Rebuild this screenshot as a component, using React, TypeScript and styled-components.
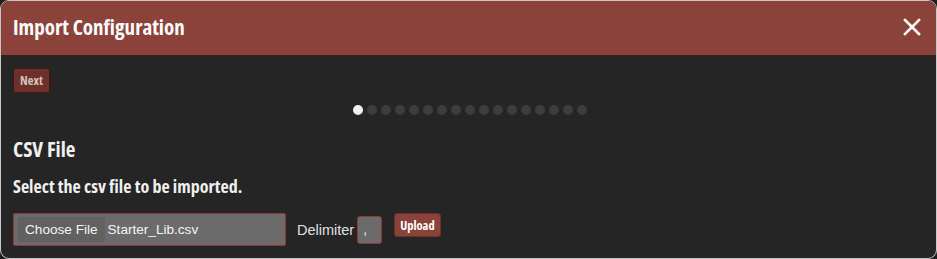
import styled, { createGlobalStyle } from "styled-components";

const GlobalStyle = createGlobalStyle`
  html, body {
    margin: 0;
    padding: 0;
    background-color: #1f1f1f;
  }
  * {
    box-sizing: border-box;
  }
`;

const condensed = `"Open Sans", "DejaVu Sans", sans-serif`;

const Dialog = styled.div`
  width: 937px;
  height: 259px;
  border: 1px solid #c8c8c8;
  border-radius: 9px;
  overflow: hidden;
  background-color: #252525;
  display: flex;
  flex-direction: column;
`;

const Header = styled.div`
  height: 54px;
  background-color: #8b423a;
  display: flex;
  align-items: center;
  justify-content: space-between;
  padding: 0 12px 2px 12px;
`;

const Title = styled.h1`
  margin: 0;
  font-family: ${condensed};
  font-stretch: 75%;
  font-weight: 700;
  font-size: 21px;
  color: #ffffff;
`;

const CloseButton = styled.button`
  border: none;
  background: none;
  padding: 0;
  width: 24px;
  height: 24px;
  display: flex;
  align-items: center;
  justify-content: center;
  cursor: pointer;
`;

const Body = styled.div`
  padding: 13px 12px 0 12px;
  display: flex;
  flex-direction: column;
`;

const SmallButton = styled.button<{ $dim?: boolean }>`
  align-self: flex-start;
  font-family: ${condensed};
  font-stretch: 75%;
  font-weight: 700;
  font-size: 12.5px;
  color: ${(p) => (p.$dim ? "#d0c4c2" : "#ffffff")};
  background-color: ${(p) => (p.$dim ? "#6f302b" : "#8b423a")};
  border: 1px solid ${(p) => (p.$dim ? "#3e1a17" : "#6c2f2a")};
  border-radius: 3px;
  padding: 0 ${(p) => (p.$dim ? "6px" : "5px")};
  height: ${(p) => (p.$dim ? "25px" : "24px")};
  cursor: pointer;
`;

const Dots = styled.div`
  display: flex;
  justify-content: center;
  gap: 4px;
  margin-top: 12px;
  padding-left: 2px;
`;

const Dot = styled.span<{ $active?: boolean }>`
  width: 10px;
  height: 10px;
  border-radius: 50%;
  background-color: ${(p) => (p.$active ? "#f2f2f2" : "#3d3d3d")};
`;

const SectionTitle = styled.h2`
  margin: 20px 0 0 0;
  font-family: ${condensed};
  font-stretch: 75%;
  font-weight: 700;
  font-size: 21px;
  color: #f0f0f0;
`;

const Instruction = styled.p`
  margin: 11px 0 0 0;
  font-family: ${condensed};
  font-stretch: 75%;
  font-weight: 700;
  font-size: 18px;
  color: #f0f0f0;
`;

const Row = styled.div`
  display: flex;
  align-items: center;
  margin-top: 15px;
`;

const FileBox = styled.div`
  width: 273px;
  height: 33px;
  background-color: #6b6b6b;
  border: 1px solid #8e3a33;
  border-radius: 2px;
  display: flex;
  align-items: center;
  padding-left: 4px;
  font-family: "Liberation Sans", Arial, sans-serif;
  font-size: 13.6px;
  color: #f4f4f4;
`;

const ChooseButton = styled.span`
  background-color: #616161;
  height: 25px;
  padding: 0 7px;
  display: flex;
  align-items: center;
  border-radius: 2px;
  margin-right: 3px;
`;

const Label = styled.span`
  font-family: "Liberation Sans", Arial, sans-serif;
  font-size: 14.5px;
  color: #e0e0e0;
  margin-left: 11px;
  margin-right: 3px;
`;

const DelimiterInput = styled.div`
  width: 25px;
  height: 28px;
  background-color: #6b6b6b;
  border: 1px solid #8e3a33;
  border-radius: 3px;
  font-family: "Liberation Sans", Arial, sans-serif;
  font-size: 14px;
  color: #f0f0f0;
  padding: 4px 0 0 5px;
  margin-right: 12px;
`;

const App = () => {
  return (
    <>
      <GlobalStyle />
      <Dialog>
        <Header>
          <Title>Import Configuration</Title>
          <CloseButton aria-label="close">
            <svg width="18" height="18" viewBox="0 0 18 18">
              <path d="M2 2 L16 16 M16 2 L2 16" stroke="#ffffff" strokeWidth="2.6" strokeLinecap="square" />
            </svg>
          </CloseButton>
        </Header>
        <Body>
          <SmallButton $dim>Next</SmallButton>
          <Dots>
            {Array.from({ length: 17 }).map((_, i) => (
              <Dot key={i} $active={i === 0} />
            ))}
          </Dots>
          <SectionTitle>CSV File</SectionTitle>
          <Instruction>Select the csv file to be imported.</Instruction>
          <Row>
            <FileBox>
              <ChooseButton>Choose File</ChooseButton>
              Starter_Lib.csv
            </FileBox>
            <Label>Delimiter</Label>
            <DelimiterInput>,</DelimiterInput>
            <SmallButton>Upload</SmallButton>
          </Row>
        </Body>
      </Dialog>
    </>
  );
};

export default App;
